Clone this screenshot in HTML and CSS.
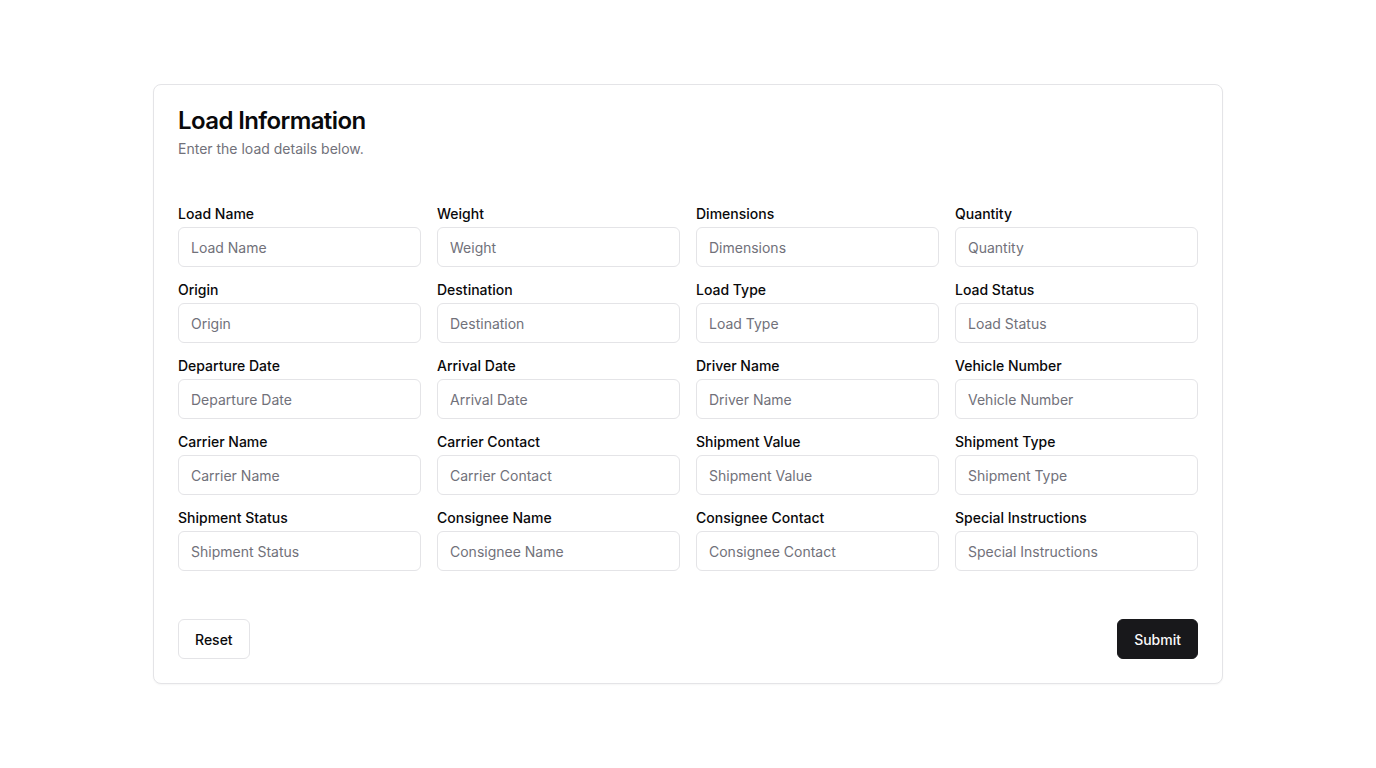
FILE: index.html
```html
<!DOCTYPE html>
<html lang="en">
<head>
<meta charset="utf-8">
<title>Load Information</title>
<link rel="stylesheet" href="styles.css">
</head>
<body>
<main class="page">
  <form class="card">
    <header class="card-header">
      <h1 class="card-title">Load Information</h1>
      <p class="card-desc">Enter the load details below.</p>
    </header>
    <div class="card-content">
      <div class="grid">
        <div class="field"><label>Load Name</label><input placeholder="Load Name"></div>
        <div class="field"><label>Weight</label><input placeholder="Weight"></div>
        <div class="field"><label>Dimensions</label><input placeholder="Dimensions"></div>
        <div class="field"><label>Quantity</label><input placeholder="Quantity"></div>
        <div class="field"><label>Origin</label><input placeholder="Origin"></div>
        <div class="field"><label>Destination</label><input placeholder="Destination"></div>
        <div class="field"><label>Load Type</label><input placeholder="Load Type"></div>
        <div class="field"><label>Load Status</label><input placeholder="Load Status"></div>
        <div class="field"><label>Departure Date</label><input placeholder="Departure Date"></div>
        <div class="field"><label>Arrival Date</label><input placeholder="Arrival Date"></div>
        <div class="field"><label>Driver Name</label><input placeholder="Driver Name"></div>
        <div class="field"><label>Vehicle Number</label><input placeholder="Vehicle Number"></div>
        <div class="field"><label>Carrier Name</label><input placeholder="Carrier Name"></div>
        <div class="field"><label>Carrier Contact</label><input placeholder="Carrier Contact"></div>
        <div class="field"><label>Shipment Value</label><input placeholder="Shipment Value"></div>
        <div class="field"><label>Shipment Type</label><input placeholder="Shipment Type"></div>
        <div class="field"><label>Shipment Status</label><input placeholder="Shipment Status"></div>
        <div class="field"><label>Consignee Name</label><input placeholder="Consignee Name"></div>
        <div class="field"><label>Consignee Contact</label><input placeholder="Consignee Contact"></div>
        <div class="field"><label>Special Instructions</label><input placeholder="Special Instructions"></div>
      </div>
    </div>
    <footer class="card-footer">
      <button type="button" class="btn btn-outline">Reset</button>
      <button type="button" class="btn btn-primary">Submit</button>
    </footer>
  </form>
</main>
</body>
</html>
```
FILE: styles.css
```css
* { box-sizing: border-box; }
html, body { margin: 0; padding: 0; background: #fff; }
body {
  font-family: Inter, "Noto Sans", sans-serif;
  color: #09090b;
}
.page {
  min-height: 100vh;
  display: flex;
  align-items: center;
  justify-content: center;
}
.card {
  width: 1070px;
  border: 1px solid #e4e4e7;
  border-radius: 8px;
  background: #fff;
  box-shadow: 0 1px 2px rgba(0,0,0,0.04);
}
.card-header {
  padding: 24px 24px 24px;
  display: flex;
  flex-direction: column;
  gap: 6px;
}
.card-title {
  margin: 0;
  font-size: 24px;
  line-height: 24px;
  font-weight: 600;
  letter-spacing: -0.6px;
}
.card-desc {
  margin: 0;
  font-size: 14px;
  line-height: 20px;
  color: #71717a;
}
.card-content {
  padding: 24px 24px 24px;
}
.grid {
  display: grid;
  grid-template-columns: repeat(4, 1fr);
  column-gap: 16px;
  row-gap: 16px;
}
.field {
  display: flex;
  flex-direction: column;
  gap: 6px;
}
.field label {
  font-size: 14px;
  line-height: 14px;
  font-weight: 500;
  color: #09090b;
}
.field input {
  height: 40px;
  width: 100%;
  border: 1px solid #e4e4e7;
  border-radius: 6px;
  padding: 0 12px;
  font-family: inherit;
  font-size: 14px;
  color: #09090b;
  background: #fff;
  outline: none;
}
.field input::placeholder { color: #71717a; }
.card-footer {
  padding: 24px;
  display: flex;
  justify-content: space-between;
  align-items: center;
}
.btn {
  height: 40px;
  padding: 0 16px;
  border-radius: 6px;
  font-family: inherit;
  font-size: 14px;
  font-weight: 500;
  cursor: pointer;
}
.btn-outline {
  background: #fff;
  border: 1px solid #e4e4e7;
  color: #09090b;
}
.btn-primary {
  background: #18181b;
  border: 1px solid #18181b;
  color: #fafafa;
}
```
